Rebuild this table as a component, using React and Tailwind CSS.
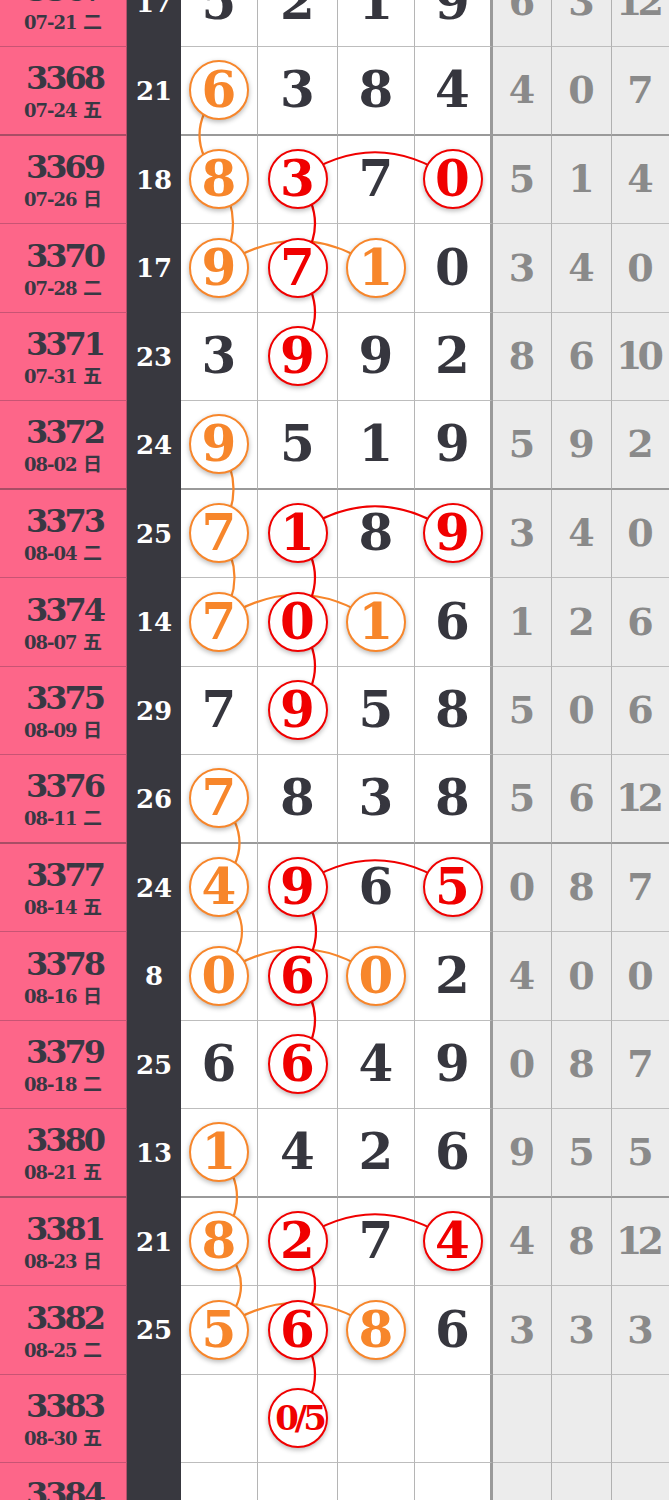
import React from "react";

const rows = [
  { p: 3367, d: "07-21", w: "二", s: 17, n: [5, 2, 1, 9], g: [6, 3, 12], c: [0, 0, 0, 0] },
  { p: 3368, d: "07-24", w: "五", s: 21, n: [6, 3, 8, 4], g: [4, 0, 7], c: ["o", 0, 0, 0] },
  { p: 3369, d: "07-26", w: "日", s: 18, n: [8, 3, 7, 0], g: [5, 1, 4], c: ["o", "r", 0, "r"] },
  { p: 3370, d: "07-28", w: "二", s: 17, n: [9, 7, 1, 0], g: [3, 4, 0], c: ["o", "r", "o", 0] },
  { p: 3371, d: "07-31", w: "五", s: 23, n: [3, 9, 9, 2], g: [8, 6, 10], c: [0, "r", 0, 0] },
  { p: 3372, d: "08-02", w: "日", s: 24, n: [9, 5, 1, 9], g: [5, 9, 2], c: ["o", 0, 0, 0] },
  { p: 3373, d: "08-04", w: "二", s: 25, n: [7, 1, 8, 9], g: [3, 4, 0], c: ["o", "r", 0, "r"] },
  { p: 3374, d: "08-07", w: "五", s: 14, n: [7, 0, 1, 6], g: [1, 2, 6], c: ["o", "r", "o", 0] },
  { p: 3375, d: "08-09", w: "日", s: 29, n: [7, 9, 5, 8], g: [5, 0, 6], c: [0, "r", 0, 0] },
  { p: 3376, d: "08-11", w: "二", s: 26, n: [7, 8, 3, 8], g: [5, 6, 12], c: ["o", 0, 0, 0] },
  { p: 3377, d: "08-14", w: "五", s: 24, n: [4, 9, 6, 5], g: [0, 8, 7], c: ["o", "r", 0, "r"] },
  { p: 3378, d: "08-16", w: "日", s: 8, n: [0, 6, 0, 2], g: [4, 0, 0], c: ["o", "r", "o", 0] },
  { p: 3379, d: "08-18", w: "二", s: 25, n: [6, 6, 4, 9], g: [0, 8, 7], c: [0, "r", 0, 0] },
  { p: 3380, d: "08-21", w: "五", s: 13, n: [1, 4, 2, 6], g: [9, 5, 5], c: ["o", 0, 0, 0] },
  { p: 3381, d: "08-23", w: "日", s: 21, n: [8, 2, 7, 4], g: [4, 8, 12], c: ["o", "r", 0, "r"] },
  { p: 3382, d: "08-25", w: "二", s: 25, n: [5, 6, 8, 6], g: [3, 3, 3], c: ["o", "r", "o", 0] },
  { p: 3383, d: "08-30", w: "五", s: "", n: ["", "0/5", "", ""], g: ["", "", ""], c: [0, "r", 0, 0] },
  { p: 3384, d: "09-01", w: "日", s: "", n: ["", "", "", ""], g: ["", "", ""], c: [0, 0, 0, 0] },
];

const SERIF = { fontFamily: "'DejaVu Serif', 'Noto Sans CJK SC', serif" };

const cy = (k) => 2.25 + 88.5 * k;
const X = [219, 297.5, 376, 452.5];
const vert = (col, k, off) =>
  `M${X[col]} ${cy(k)} Q${X[col] + off} ${cy(k) + 44.25} ${X[col]} ${cy(k + 1)}`;
const arc = (c1, c2, k) =>
  `M${X[c1]} ${cy(k)} Q${(X[c1] + X[c2]) / 2} ${cy(k) - 54} ${X[c2]} ${cy(k)}`;

const orangePaths = [
  vert(0, 1, -39), vert(0, 2, 28), arc(0, 2, 3),
  vert(0, 5, 29), vert(0, 6, 31), arc(0, 2, 7),
  vert(0, 9, 41), vert(0, 10, 46), arc(0, 2, 11),
  vert(0, 13, 36), vert(0, 14, 44), arc(0, 2, 15),
];
const redPaths = [
  arc(1, 3, 2), vert(1, 2, 35), vert(1, 3, 35),
  arc(1, 3, 6), vert(1, 6, 35), vert(1, 7, 35),
  arc(1, 3, 10), vert(1, 10, 37), vert(1, 11, 35),
  arc(1, 3, 14), vert(1, 14, 35), vert(1, 15, 35),
];

function Circle({ color, children, small }) {
  const cls =
    color === "o"
      ? "border-[#f7862b] text-[#f7862b]"
      : "border-[#f00000] text-[#f00000]";
  return (
    <div
      className={
        "relative z-20 flex h-[60px] w-[60px] items-center justify-center rounded-full border-2 bg-white font-bold leading-none shadow-[0_2px_5px_rgba(0,0,0,0.28)] " +
        cls
      }
    >
      {small ? (
        <span className="pl-[3px] text-[34px] tracking-[-4px]">{children}</span>
      ) : (
        <span className="text-[50px]">{children}</span>
      )}
    </div>
  );
}

function DigitCell({ value, mark, width, thick, last }) {
  const bottom = thick
    ? "border-b-2 border-b-[#9a9a9a]"
    : "border-b border-b-[#bdbdbd]";
  const right = last
    ? "border-r-[3px] border-r-[#9a9a9a]"
    : "border-r border-r-[#b5b5b5]";
  return (
    <div
      className={`flex h-full shrink-0 items-center justify-center bg-white ${width} ${bottom} ${right}`}
    >
      {mark ? (
        <Circle color={mark} small={String(value).length > 1}>
          {value}
        </Circle>
      ) : (
        <span className="text-[50px] font-bold leading-none text-[#36363e]">{value}</span>
      )}
    </div>
  );
}

function GrayCell({ value, width, thick, last }) {
  const bottom = thick
    ? "border-b-2 border-b-[#9a9a9a]"
    : "border-b border-b-[#bdbdbd]";
  const right = last ? "" : "border-r border-r-[#b0b0b0]";
  return (
    <div
      className={`flex h-full items-center justify-center bg-[#ececec] ${width} ${bottom} ${right}`}
    >
      <span
        className={`text-[38px] font-bold leading-none text-[#8a8a8a] ${
          String(value).length > 1 ? "pr-[6px] tracking-[-5px]" : ""
        }`}
      >
        {value}
      </span>
    </div>
  );
}

function Row({ r }) {
  const thick = r.p % 4 === 0;
  const widths = ["w-[77px]", "w-[80px]", "w-[77px]", "w-[78px]"];
  const gw = ["w-[59px] shrink-0", "w-[60px] shrink-0", "flex-1"];
  return (
    <div className="flex h-[88.5px]">
      <div
        className={`flex h-full w-[127px] shrink-0 flex-col items-center justify-center border-r border-r-[#b5516b] bg-[#fd6689] pt-[2px] text-[#383843] ${
          thick ? "border-b-2 border-b-[#a94d65]" : "border-b border-b-[#c85474]"
        }`}
      >
        <div className="pl-[3px] text-[32px] font-bold leading-none tracking-[-3px]">{r.p}</div>
        <div className="mt-[7px] text-[18px] font-bold leading-none">
          <span className="tracking-[-1px]">{r.d}</span>
          <span className="text-[19px]"> {r.w}</span>
        </div>
      </div>
      <div className="flex h-full w-[54px] shrink-0 items-center justify-center bg-[#38383f]">
        <span className="text-[26px] font-bold leading-none text-white">{r.s}</span>
      </div>
      {r.n.map((v, i) => (
        <DigitCell
          key={i}
          value={v}
          mark={r.c[i]}
          width={widths[i]}
          thick={thick}
          last={i === 3}
        />
      ))}
      {r.g.map((v, i) => (
        <GrayCell key={i} value={v} width={gw[i]} thick={thick} last={i === 2} />
      ))}
    </div>
  );
}

export default function App() {
  return (
    <div className="relative h-[1500px] w-[669px] overflow-hidden bg-white" style={SERIF}>
      <div className="mt-[-41.5px]">
        {rows.map((r) => (
          <Row key={r.p} r={r} />
        ))}
      </div>
      <svg
        className="pointer-events-none absolute left-0 top-0 z-10"
        width="669"
        height="1500"
        viewBox="0 0 669 1500"
        fill="none"
      >
        {orangePaths.map((d, i) => (
          <path key={"o" + i} d={d} stroke="#f7862b" strokeWidth="2.2" />
        ))}
        {redPaths.map((d, i) => (
          <path key={"r" + i} d={d} stroke="#f00000" strokeWidth="2.2" />
        ))}
      </svg>
    </div>
  );
}
